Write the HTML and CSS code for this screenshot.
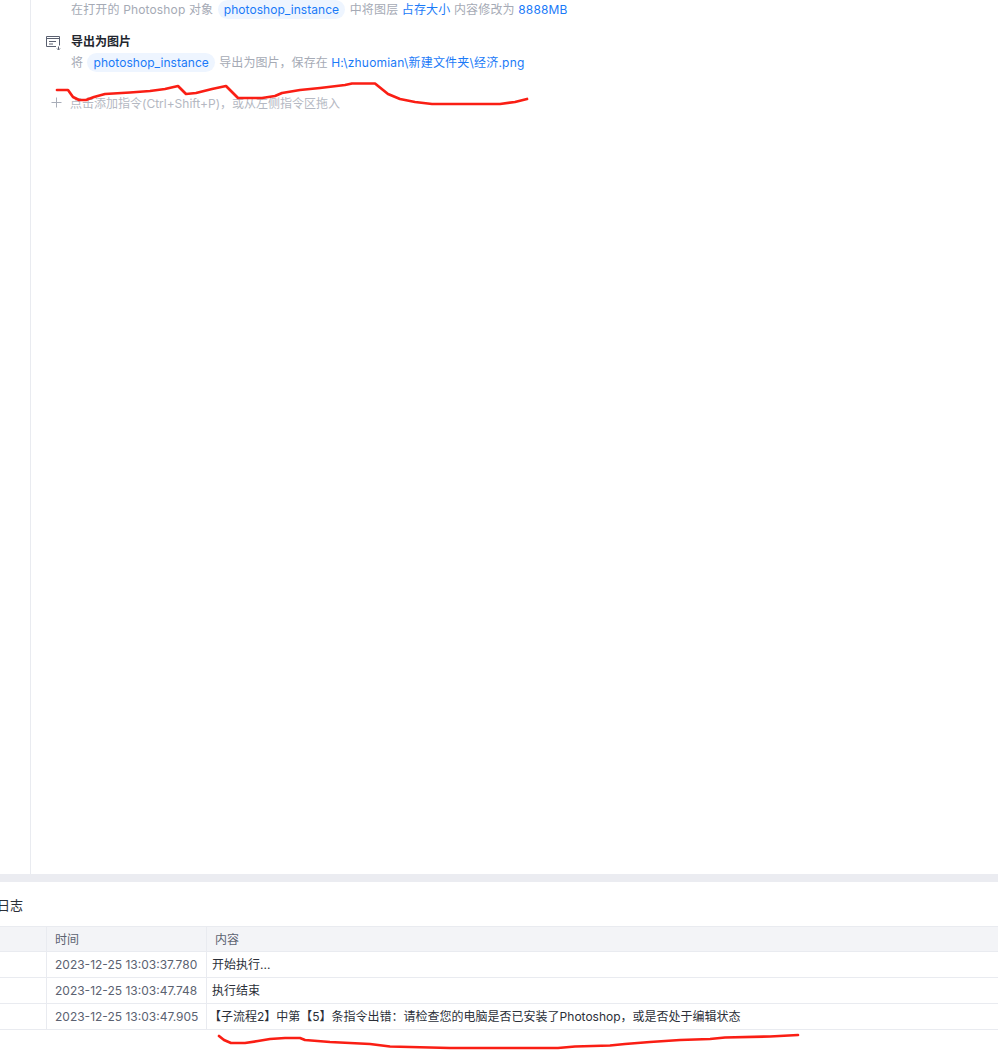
FILE: index.html
```html
<!DOCTYPE html>
<html lang="zh">
<head>
<meta charset="utf-8">
<title>流程编辑</title>
<link rel="stylesheet" href="styles.css">
</head>
<body>
<div class="page">
  <section class="editor">
    <div class="gutter"></div>
    <div class="commands">
      <div class="command first">
        <div class="desc">在打开的 Photoshop 对象 <span class="pill">photoshop_instance</span> 中将图层 <span class="link">占存大小</span> 内容修改为 <span class="link">8888MB</span></div>
      </div>
      <div class="command">
        <div class="title">
          <svg class="icon" width="16" height="16" viewBox="0 0 16 16" fill="none" stroke="#5a6070" stroke-width="1">
            <path d="M13.500 10.500V1.500H0.500V11.500H10"/>
            <path d="M0.500 3.500H13.500M3 6.500H10M3 9H7"/>
            <path d="M12.500 11.500V14.500M11 13.500L12.500 15L14 13.500"/>
          </svg>
          <span>导出为图片</span>
        </div>
        <div class="desc tight">将 <span class="pill">photoshop_instance</span> 导出为图片，保存在 <span class="link wide">H:\zhuomian\新建文件夹\经济.png</span></div>
      </div>
      <div class="add">
        <svg class="plus" width="11" height="11" viewBox="0 0 11 11" stroke="#a8adb8" stroke-width="1"><path d="M5.500 0.500V10.500M0.500 5.500H10.500"/></svg>
        <span>点击添加指令(Ctrl+Shift+P)，或从左侧指令区拖入</span>
      </div>
    </div>
  </section>
  <div class="divider"></div>
  <section class="log">
    <h2 class="log-title">日志</h2>
    <div class="table">
      <div class="row head"><div class="c-a"></div><div class="c-time">时间</div><div class="c-text">内容</div></div>
      <div class="row"><div class="c-a"></div><div class="c-time">2023-12-25 13:03:37.780</div><div class="c-text">开始执行...</div></div>
      <div class="row"><div class="c-a"></div><div class="c-time">2023-12-25 13:03:47.748</div><div class="c-text">执行结束</div></div>
      <div class="row"><div class="c-a"></div><div class="c-time">2023-12-25 13:03:47.905</div><div class="c-text pull">【子流程2】中第【5】条指令出错：请检查您的电脑是否已安装了Photoshop，或是否处于编辑状态</div></div>
    </div>
  </section>
  <svg class="scribble" width="998" height="1063" viewBox="0 0 998 1063" fill="none" stroke="#fa1e14" stroke-width="2.700" stroke-linejoin="round" stroke-linecap="round">
    <path d="M57 90H68L73 97L79 100H86L94 97L105 94L130 92.500L150 91L165 89L178 86L186 94L196 93L212 89L226 86L238 98H262L275 96L282 93L300 90L320 88L345 85L352 83.500H375L388 94L400 99L415 102L432 104H500L515 102L527 99"/>
    <path d="M219 1036L224 1040L231 1043H245L258 1041L270 1039L285 1038H300L305 1040L330 1042L370 1044L390 1046.500L450 1048H558L575 1046.500L610 1045.500L625 1044L650 1042L680 1040L710 1039L725 1037.500L770 1036.500L798 1035"/>
  </svg>
</div>
</body>
</html>
```

FILE: styles.css
```css
* { box-sizing: border-box; }
html, body { margin: 0; padding: 0; background: #fff; }
.page {
  position: relative;
  width: 998px;
  height: 1063px;
  overflow: hidden;
  font-family: "Inter", "Noto Sans CJK SC", sans-serif;
  font-size: 12px;
  display: flex;
  flex-direction: column;
}
.editor { height: 874px; display: flex; flex: none; overflow: hidden; }
.gutter { width: 31px; flex: none; border-right: 1px solid #e9ebf0; }
.commands { flex: 1; padding-left: 14px; margin-top: -1px; display: flex; flex-direction: column; }
.command { padding-left: 26px; }
.command.first { margin-bottom: 11px; }
.title {
  position: relative;
  height: 20px;
  line-height: 20px;
  font-weight: 700;
  font-size: 12px;
  color: #22262e;
}
.icon { position: absolute; left: -25px; top: 3px; }
.desc {
  height: 22px;
  line-height: 22px;
  color: #a5aab5;
  white-space: nowrap;
  letter-spacing: 0.150px;
}
.desc.tight { letter-spacing: 0.050px; }
.pill {
  display: inline-block;
  height: 19px;
  line-height: 19px;
  padding: 0 6px;
  margin: 0 1px;
  background: #eef5ff;
  border-radius: 10px;
  color: #1a7af8;
  letter-spacing: 0.050px;
}
.link { color: #1a7af8; }
.link.wide { letter-spacing: 0.200px; }
.add {
  display: flex;
  align-items: center;
  height: 20px;
  margin-top: 18px;
  margin-left: 6px;
  gap: 8px;
  color: #b4b8c2;
  white-space: nowrap;
}
.plus { flex: none; }
.divider { height: 8px; flex: none; background: #ebecf1; }
.log { flex: 1; }
.log-title {
  margin: 0 0 0 -3px;
  height: 44px;
  line-height: 46px;
  font-size: 13px;
  font-weight: 400;
  color: #2b2f38;
}
.table { border-top: 1px solid #e9ebf0; }
.row {
  display: flex;
  height: 26px;
  line-height: 25px;
  border-bottom: 1px solid #e9ebf0;
}
.head { background: #f3f4f7; color: #5b6271; height: 25px; line-height: 25px; }
.c-a { width: 47px; flex: none; border-right: 1px solid #e9ebf0; }
.c-time { width: 160px; flex: none; padding-left: 8px; border-right: 1px solid #e9ebf0; color: #5b6271; white-space: nowrap; }
.c-text { flex: 1; padding-left: 5px; color: #2b2f38; white-space: nowrap; }
.c-text.pull { padding-left: 2px; }
.head .c-text { padding-left: 8px; color: #5b6271; }
.scribble { position: absolute; left: 0; top: 0; pointer-events: none; }
```
